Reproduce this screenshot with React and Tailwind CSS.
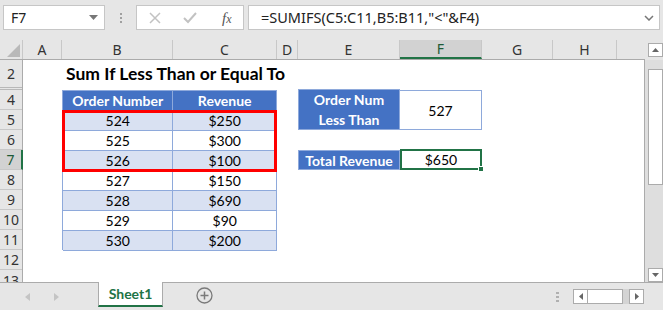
import React from "react";

const cols = [
  { l: "A", w: "w-[39px]" },
  { l: "B", w: "w-[111px]" },
  { l: "C", w: "w-[104px]" },
  { l: "D", w: "w-[21px]" },
  { l: "E", w: "w-[102px]" },
  { l: "F", w: "w-[82px]", sel: true },
  { l: "G", w: "w-[71px]" },
  { l: "H", w: "w-[64px]" },
];

const rowHeads = [
  { n: "2", h: "h-[30px] border-b-[3px] border-double border-b-[#b8b8b8]" },
  { n: "4", h: "h-[20px]" },
  { n: "5", h: "h-[20px]" },
  { n: "6", h: "h-[20px]" },
  { n: "7", h: "h-[20px]", sel: true },
  { n: "8", h: "h-[20px]" },
  { n: "9", h: "h-[20px]" },
  { n: "10", h: "h-[20px]" },
  { n: "11", h: "h-[20px]" },
  { n: "12", h: "h-[20px]" },
  { n: "13", h: "flex-1" },
];

const orders = [
  ["524", "$250"],
  ["525", "$300"],
  ["526", "$100"],
  ["527", "$150"],
  ["528", "$690"],
  ["529", "$90"],
  ["530", "$200"],
];

const cellFont = { fontFamily: "Lato, 'Open Sans', sans-serif" };

const FormulaBar = () => (
  <div className="h-[40px] flex items-start pt-[5px] bg-[#e6e6e6]" style={{ fontFamily: "'Noto Sans', 'Open Sans', sans-serif" }}>
    <div className="ml-[3px] w-[102px] h-[25px] bg-white border border-[#c6c6c6] flex items-center justify-between pl-[7px] pr-[6px]">
      <span className="text-[14px] text-[#222]">F7</span>
      <svg width="9" height="5" viewBox="0 0 9 5">
        <path d="M0 0 L9 0 L4.5 5 Z" fill="#777" />
      </svg>
    </div>
    <div className="w-[31px] h-[25px] flex flex-col items-center justify-center gap-[2px]">
      <span className="w-[2px] h-[2px] bg-[#a0a0a0]" />
      <span className="w-[2px] h-[2px] bg-[#a0a0a0]" />
      <span className="w-[2px] h-[2px] bg-[#a0a0a0]" />
    </div>
    <div className="w-[108px] h-[25px] bg-white border border-[#c6c6c6] flex items-center">
      <svg className="ml-[12px]" width="12" height="12" viewBox="0 0 12 12">
        <path d="M1 1 L11 11 M11 1 L1 11" stroke="#c2c2c2" strokeWidth="1.5" />
      </svg>
      <svg className="ml-[22px]" width="14" height="12" viewBox="0 0 14 12">
        <path d="M1 6 L5 10 L13 1" stroke="#c2c2c2" strokeWidth="2" fill="none" />
      </svg>
      <span className="ml-[25px] text-[#555] italic leading-none" style={{ fontFamily: "'Liberation Serif', serif" }}>
        <span className="text-[15px]">f</span>
        <span className="text-[12px]">x</span>
      </span>
    </div>
    <div className="ml-[4px] w-[412px] h-[25px] bg-white border border-[#c6c6c6] flex items-center justify-between pl-[12px] pr-[5px]">
      <span className="text-[14.5px] text-[#222]">=SUMIFS(C5:C11,B5:B11,"&lt;"&amp;F4)</span>
      <svg width="10" height="6" viewBox="0 0 10 6">
        <path d="M1 1 L5 5 L9 1" stroke="#777" strokeWidth="1.5" fill="none" />
      </svg>
    </div>
  </div>
);

const ColumnHeader = () => (
  <div className="h-[20px] flex bg-[#e6e6e6] border-b border-[#ababab] text-[14px] text-[#333]" style={{ fontFamily: "'Noto Sans', 'Open Sans', sans-serif" }}>
    <div className="w-[23px] h-full relative border-r border-[#c8c8c8]">
      <svg className="absolute left-[7px] top-[4px]" width="13" height="13" viewBox="0 0 13 13">
        <path d="M13 0 L13 13 L0 13 Z" fill="#b9b9b9" />
      </svg>
    </div>
    {cols.map((c) => (
      <div
        key={c.l}
        className={`${c.w} h-full flex items-center justify-center border-r border-[#c8c8c8] ${
          c.sel ? "bg-[#d2d2d2] text-[#1e5a37] border-b-2 border-b-[#217346]" : ""
        }`}
      >
        {c.l}
      </div>
    ))}
    <div className="flex-1" />
  </div>
);

const RowHeader = () => (
  <div className="w-[23px] flex flex-col bg-[#e6e6e6] border-r border-[#ababab] text-[14px] text-[#333]" style={{ fontFamily: "'Noto Sans', 'Open Sans', sans-serif" }}>
    {rowHeads.map((r) => (
      <div
        key={r.n}
        className={`${r.h} flex items-center justify-center border-b border-[#c8c8c8] overflow-hidden ${
          r.sel ? "bg-[#d2d2d2] text-[#1e5a37] border-r-2 border-r-[#217346] -mr-px" : ""
        }`}
      >
        {r.n}
      </div>
    ))}
  </div>
);

const OrdersTable = () => (
  <div className="col-start-2 col-span-2 row-start-2 row-span-8 relative flex flex-col border-l border-t border-[#8ea9db] text-[14px] text-black" style={cellFont}>
    <div className="h-[20px] flex bg-[#4472c4] text-white font-bold">
      <div className="w-[111px] flex items-center justify-center border-r border-b border-[#8ea9db]">Order Number</div>
      <div className="w-[104px] flex items-center justify-center border-r border-b border-[#8ea9db]">Revenue</div>
    </div>
    {orders.map(([o, r], i) => (
      <div key={o} className={`h-[20px] flex ${i % 2 === 0 ? "bg-[#d9e1f2]" : "bg-white"}`}>
        <div className="w-[111px] flex items-center justify-center border-r border-b border-[#8ea9db]">{o}</div>
        <div className="w-[104px] flex items-center justify-center border-r border-b border-[#8ea9db]">{r}</div>
      </div>
    ))}
    <div className="absolute left-[-1px] right-0 top-[19px] h-[62px] border-[3px] border-[#ff0000]" />
  </div>
);

const SheetBody = () => (
  <div className="flex-1 flex bg-white">
    <RowHeader />
    <div className="flex-1 grid grid-cols-[39px_111px_104px_21px_102px_82px_71px_64px_1fr] grid-rows-[30px_repeat(9,20px)_1fr] border-r border-[#ababab]">
      <div className="col-start-2 col-span-5 row-start-1 flex items-end pb-[3px] pl-[4px] text-[17.5px] font-bold text-black whitespace-nowrap" style={cellFont}>
        Sum If Less Than or Equal To
      </div>
      <OrdersTable />
      <div className="col-start-5 col-span-2 row-start-2 row-span-2 flex text-[14px]" style={cellFont}>
        <div className="w-[102px] -mt-px bg-[#4472c4] text-white font-bold flex flex-col items-center justify-center leading-[20px] border border-[#8ea9db]">
          <span>Order Num</span>
          <span>Less Than</span>
        </div>
        <div className="w-[82px] bg-white flex items-center justify-center border border-l-0 border-[#8ea9db] text-black">527</div>
      </div>
      <div className="col-start-5 col-span-2 row-start-5 flex text-[14px]" style={cellFont}>
        <div className="w-[102px] bg-[#4472c4] text-white font-bold flex items-center justify-center border border-[#8ea9db]">Total Revenue</div>
        <div className="w-[82px] relative bg-white flex items-center justify-center border-2 border-[#217346] text-black -mt-px">
          $650
          <span className="absolute right-[-4px] bottom-[-4px] w-[6px] h-[6px] bg-[#217346] border border-white" />
        </div>
      </div>
    </div>
  </div>
);

const VScroll = () => (
  <div className="w-[18px] flex flex-col bg-[#dedede]">
    <div className="h-[20px] bg-[#e6e6e6] flex items-start pt-[3px] pl-[3px]">
      <div className="w-[15px] h-[14px] bg-white border border-[#ababab] flex items-center justify-center">
        <svg width="7" height="4" viewBox="0 0 7 4"><path d="M0 4 L3.5 0 L7 4 Z" fill="#666" /></svg>
      </div>
    </div>
    <div className="flex-1 flex flex-col pl-[3px]">
      <div className="mt-[9px] w-[15px] h-[116px] bg-white border border-[#ababab]" />
      <div className="flex-1" />
      <div className="w-[15px] h-[14px] bg-white border border-[#ababab] flex items-center justify-center">
        <svg width="7" height="4" viewBox="0 0 7 4"><path d="M0 0 L7 0 L3.5 4 Z" fill="#666" /></svg>
      </div>
    </div>
  </div>
);

const SheetTabs = () => (
  <div className="h-[28px] flex bg-[#e6e6e6] border-t border-[#ababab]" style={{ fontFamily: "'Noto Sans', 'Open Sans', sans-serif" }}>
    <div className="w-[98px] flex items-center">
      <svg className="ml-[25px]" width="5" height="8" viewBox="0 0 5 8"><path d="M5 0 L5 8 L0 4 Z" fill="#c4c4c4" /></svg>
      <svg className="ml-[24px]" width="5" height="8" viewBox="0 0 5 8"><path d="M0 0 L0 8 L5 4 Z" fill="#c4c4c4" /></svg>
    </div>
    <div className="w-[65px] h-[25px] -mt-px bg-white border-x border-[#ababab] border-b-2 border-b-[#217346] flex items-center justify-center text-[14px] font-bold text-[#217346]" style={cellFont}>
      Sheet1
    </div>
    <div className="ml-[33px] flex items-center pb-[2px]">
      <svg width="17" height="17" viewBox="0 0 17 17">
        <circle cx="8.5" cy="8.5" r="7.5" fill="none" stroke="#7a7a7a" strokeWidth="1.3" />
        <path d="M8.5 4.5 V12.5 M4.5 8.5 H12.5" stroke="#7a7a7a" strokeWidth="1.5" />
      </svg>
    </div>
    <div className="flex-1" />
    <div className="flex flex-col justify-center gap-[2px] mr-[14px]">
      <span className="w-[3px] h-[2px] bg-[#b0b0b0]" />
      <span className="w-[3px] h-[2px] bg-[#b0b0b0]" />
      <span className="w-[3px] h-[2px] bg-[#b0b0b0]" />
    </div>
    <div className="flex items-center pb-[1px] mr-[19px]">
      <div className="w-[15px] h-[15px] bg-white border border-[#ababab] flex items-center justify-center">
        <svg width="4" height="7" viewBox="0 0 4 7"><path d="M4 0 L4 7 L0 3.5 Z" fill="#666" /></svg>
      </div>
      <div className="w-[35px] h-[15px] bg-white border border-l-0 border-[#ababab]" />
      <div className="w-[6px] h-[15px] bg-[#d4d4d4]" />
      <div className="w-[15px] h-[15px] bg-white border border-[#ababab] flex items-center justify-center">
        <svg width="4" height="7" viewBox="0 0 4 7"><path d="M0 0 L0 7 L4 3.5 Z" fill="#666" /></svg>
      </div>
    </div>
  </div>
);

export default function App() {
  return (
    <div className="w-[663px] h-[310px] flex flex-col overflow-hidden bg-[#e6e6e6]">
      <FormulaBar />
      <div className="flex-1 flex min-h-0">
        <div className="w-[645px] flex flex-col">
          <ColumnHeader />
          <SheetBody />
        </div>
        <VScroll />
      </div>
      <SheetTabs />
    </div>
  );
}
